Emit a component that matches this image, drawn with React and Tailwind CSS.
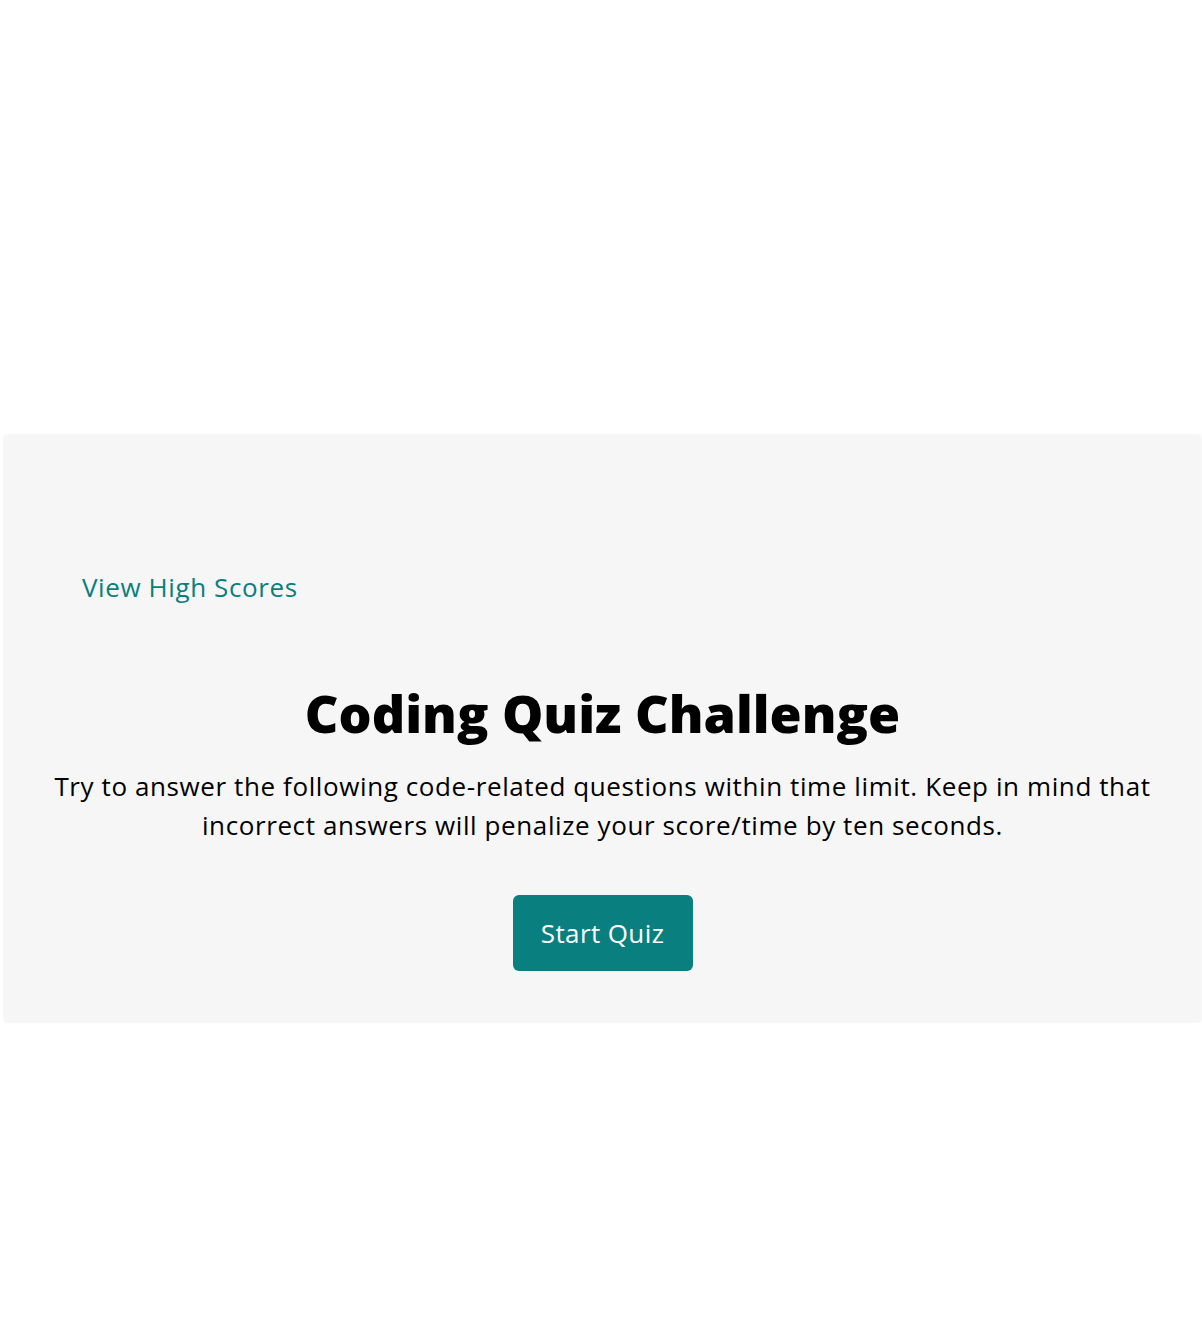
export default function App() {
  return (
    <div className="min-h-[1328px] bg-white pt-[435px] font-['Open_Sans',sans-serif]">
      {/* quiz card */}
      <section className="ml-1 w-[1197px] h-[587px] bg-[#f6f6f6] rounded-[3px] shadow-[0_0_3px_rgba(0,0,0,0.08)] flex flex-col">
        <header className="pt-[134px] pl-[78px]">
          <a href="#" className="text-[26px] leading-[36px] tracking-[0.6px] text-[#0a7f80]">
            View High Scores
          </a>
        </header>

        <div className="flex flex-col items-center text-center mt-[76px]">
          <h1 className="text-[52px] leading-[64px] font-extrabold text-black">
            Coding Quiz Challenge
          </h1>
          <p className="mt-[22px] w-[1120px] text-[26px] leading-[39px] tracking-[0.6px] text-black">
            Try to answer the following code-related questions within time limit. Keep in mind that incorrect answers will penalize your score/time by ten seconds.
          </p>
          <button className="mt-[50px] w-[180px] h-[76px] rounded-[6px] bg-[#0a7f80] text-white text-[26px] tracking-[0.4px]">
            Start Quiz
          </button>
        </div>
      </section>
    </div>
  );
}
